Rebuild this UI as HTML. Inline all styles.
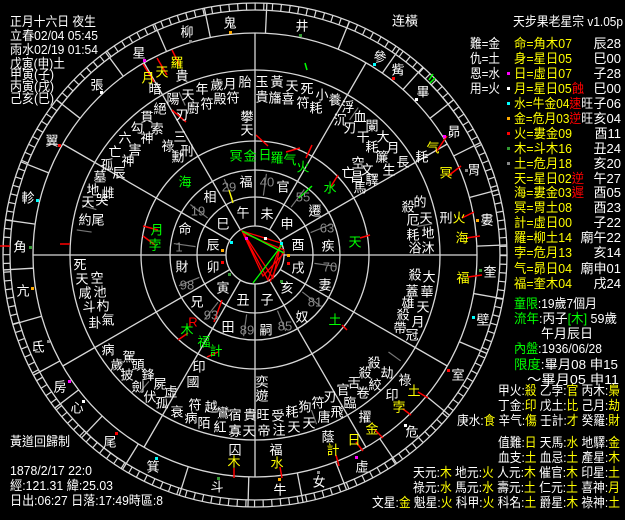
<!DOCTYPE html>
<html><head><meta charset="utf-8">
<style>
html,body{margin:0;padding:0;background:#000;}
body{width:625px;height:520px;overflow:hidden;}
svg{display:block;font-family:"Liberation Sans","Noto Sans CJK TC",sans-serif;font-size:13px;}
.c text{text-anchor:middle;dominant-baseline:central;}
.w{fill:#fff}.y{fill:#ff0}.g{fill:#0f0}.r{fill:#f00}.gr{fill:#8a8a8a}
</style></head><body>
<svg width="625" height="520" viewBox="0 0 625 520" xmlns="http://www.w3.org/2000/svg">
<rect width="625" height="520" fill="#000"/>
<g fill="none" stroke="#d8d8d8" stroke-width="1.3">
<circle cx="255" cy="255" r="252"/>
<circle cx="255" cy="255" r="245"/>
<circle cx="255" cy="255" r="248.5" stroke-width="7" stroke-dasharray="1.2 7.47"/>
<circle cx="255" cy="255" r="222"/>
<circle cx="255" cy="255" r="185"/>
<circle cx="255" cy="255" r="114"/>
<circle cx="255" cy="255" r="85"/>
<circle cx="255" cy="255" r="58"/>
<circle cx="255" cy="255" r="29"/>
</g>
<g transform="translate(255,255)" stroke="#d8d8d8" stroke-width="1.3">
<line x1="29" x2="222" transform="rotate(0)"/><line x1="29" x2="222" transform="rotate(30)"/>
<line x1="29" x2="222" transform="rotate(60)"/><line x1="29" x2="222" transform="rotate(90)"/>
<line x1="29" x2="222" transform="rotate(120)"/><line x1="29" x2="222" transform="rotate(150)"/>
<line x1="29" x2="222" transform="rotate(180)"/><line x1="29" x2="222" transform="rotate(210)"/>
<line x1="29" x2="222" transform="rotate(240)"/><line x1="29" x2="222" transform="rotate(270)"/>
<line x1="29" x2="222" transform="rotate(300)"/><line x1="29" x2="222" transform="rotate(330)"/>
<g>
<line x1="222" x2="252" transform="rotate(272.7)"/><line x1="222" x2="252" transform="rotate(292)"/>
<line x1="222" x2="252" transform="rotate(305)"/><line x1="222" x2="252" transform="rotate(311.8)"/>
<line x1="222" x2="252" transform="rotate(322)"/><line x1="222" x2="252" transform="rotate(333.5)"/>
<line x1="222" x2="252" transform="rotate(345)"/><line x1="222" x2="252" transform="rotate(357.7)"/>
<line x1="222" x2="252" transform="rotate(10)"/><line x1="222" x2="252" transform="rotate(23)"/>
<line x1="222" x2="252" transform="rotate(39.5)"/><line x1="222" x2="252" transform="rotate(55.8)"/>
<line x1="222" x2="252" transform="rotate(68.7)"/><line x1="222" x2="252" transform="rotate(79)"/>
<line x1="222" x2="252" transform="rotate(91.6)"/><line x1="222" x2="252" transform="rotate(107.5)"/>
<line x1="222" x2="252" transform="rotate(121.7)"/><line x1="222" x2="252" transform="rotate(133.5)"/>
<line x1="222" x2="252" transform="rotate(142.6)"/><line x1="222" x2="252" transform="rotate(151.5)"/>
<line x1="222" x2="252" transform="rotate(164)"/><line x1="222" x2="252" transform="rotate(176.6)"/>
<line x1="222" x2="252" transform="rotate(188)"/><line x1="222" x2="252" transform="rotate(201.7)"/>
<line x1="222" x2="252" transform="rotate(218)"/><line x1="222" x2="252" transform="rotate(233.6)"/>
<line x1="222" x2="252" transform="rotate(246.5)"/><line x1="222" x2="252" transform="rotate(258.4)"/>
</g>
<g stroke="#777" stroke-width="1.2">
<line x1="60" x2="82" transform="rotate(-82)"/><line x1="60" x2="82" transform="rotate(-53)"/>
<line x1="60" x2="82" transform="rotate(-22)"/><line x1="60" x2="82" transform="rotate(8)"/>
<line x1="60" x2="82" transform="rotate(38)"/><line x1="60" x2="82" transform="rotate(68)"/>
<line x1="60" x2="82" transform="rotate(98)"/><line x1="60" x2="82" transform="rotate(128)"/>
<line x1="60" x2="82" transform="rotate(158)"/><line x1="60" x2="82" transform="rotate(188)"/>
<line x1="60" x2="82" transform="rotate(218)"/><line x1="60" x2="82" transform="rotate(248)"/>
<line x1="165" x2="180" transform="rotate(-55)"/><line x1="165" x2="180" transform="rotate(-10)"/>
<line x1="165" x2="180" transform="rotate(36)"/><line x1="165" x2="180" transform="rotate(70)"/>
<line x1="165" x2="180" transform="rotate(130)"/><line x1="165" x2="180" transform="rotate(188)"/>
<line x1="165" x2="180" transform="rotate(196)"/><line x1="165" x2="180" transform="rotate(245)"/>
</g>
</g>
<g stroke-width="1.3" fill="none">
<polyline stroke="#f00" points="242,231 281,243 268,280 242,231 284,253 263,276 242,231 273,278 281,243"/>
<polyline stroke="#e00" points="243,233 284,250 270,282"/>
<line stroke="#0f0" x1="242" y1="231" x2="284" y2="253"/>
<line stroke="#0f0" x1="253" y1="283" x2="282" y2="245"/>
</g>
<g stroke="#f00" stroke-width="1.5">
<line x1="143" y1="64" x2="154" y2="82"/><line x1="157" y1="58" x2="167" y2="75"/><line x1="172" y1="50" x2="180" y2="66"/>
<line x1="436" y1="152" x2="447" y2="136"/><line x1="448" y1="176" x2="461" y2="166"/>
<line x1="462" y1="218" x2="474" y2="212"/><line x1="466" y1="238" x2="480" y2="236"/><line x1="468" y1="277" x2="482" y2="275"/>
<line x1="418" y1="392" x2="428" y2="398"/><line x1="403" y1="409" x2="411" y2="415"/><line x1="375" y1="430" x2="383" y2="438"/>
<line x1="356" y1="442" x2="363" y2="451"/><line x1="336" y1="455" x2="339" y2="466"/><line x1="280" y1="467" x2="282" y2="478"/><line x1="234" y1="468" x2="234" y2="478"/>
<line x1="214" y1="322" x2="222" y2="300"/><line x1="178" y1="340" x2="188" y2="333"/><line x1="207" y1="357" x2="218" y2="352"/>
<line x1="143" y1="226" x2="158" y2="230"/><line x1="143" y1="236" x2="155" y2="245"/>
<line x1="312" y1="145" x2="306" y2="158"/><line x1="338" y1="175" x2="330" y2="188"/><line x1="360" y1="238" x2="370" y2="235"/>
<line x1="342" y1="325" x2="347" y2="330"/><line x1="172" y1="110" x2="186" y2="122"/>
<line x1="256" y1="135" x2="268" y2="146"/><line x1="286" y1="152" x2="300" y2="148"/><line x1="60" y1="244" x2="70" y2="244"/>
<line x1="0" y1="246" x2="10" y2="246"/>
</g>
<g stroke="#0f0" stroke-width="1.5"><line x1="299" y1="198" x2="312" y2="186"/><line x1="429" y1="80" x2="433" y2="74"/><line x1="430" y1="83" x2="435" y2="78"/></g>
<line x1="305" y1="63" x2="307" y2="70" stroke="#0f0" stroke-width="1.5"/>
<line x1="229" y1="190" x2="233" y2="203" stroke="#ff0" stroke-width="1.3"/>
<g>
<rect x="245" y="237" width="3" height="3" fill="#f0f"/><rect x="264" y="237" width="3" height="3" fill="#fff"/>
<rect x="280" y="242" width="3" height="3" fill="#0ff"/><rect x="287" y="254" width="3" height="3" fill="#fa0"/>
<rect x="287" y="262" width="3" height="3" fill="#f00"/><rect x="280" y="280" width="3" height="3" fill="#393"/>
<rect x="228" y="273" width="3" height="3" fill="#393"/><rect x="221" y="261" width="3" height="3" fill="#f00"/>
<rect x="221" y="249" width="3" height="3" fill="#fa0"/><rect x="230" y="241" width="3" height="3" fill="#0ff"/>
<rect x="229" y="31" width="3" height="3" fill="#fa0"/><rect x="189" y="40" width="3" height="3" fill="#888"/>
<rect x="143" y="59" width="3" height="3" fill="#f0f"/><rect x="100" y="91" width="3" height="3" fill="#fff"/>
<rect x="58" y="144" width="3" height="3" fill="#f00"/><rect x="36" y="199" width="3" height="3" fill="#0ff"/>
<rect x="29" y="246" width="3" height="3" fill="#393"/><rect x="31" y="287" width="3" height="3" fill="#fa0"/>
<rect x="47" y="340" width="3" height="3" fill="#888"/><rect x="68" y="380" width="3" height="3" fill="#f0f"/>
<rect x="82" y="400" width="3" height="3" fill="#fff"/><rect x="115" y="432" width="3" height="3" fill="#f00"/>
<rect x="155" y="457" width="3" height="3" fill="#0ff"/><rect x="217" y="477" width="3" height="3" fill="#393"/>
<rect x="278" y="478" width="3" height="3" fill="#fa0"/><rect x="317" y="471" width="3" height="3" fill="#888"/>
<rect x="355" y="456" width="3" height="3" fill="#f0f"/><rect x="404" y="424" width="3" height="3" fill="#fff"/>
<rect x="447" y="369" width="3" height="3" fill="#f00"/><rect x="472" y="316" width="3" height="3" fill="#0ff"/>
<rect x="479" y="269" width="3" height="3" fill="#393"/><rect x="476" y="219" width="3" height="3" fill="#fa0"/>
<rect x="465" y="169" width="3" height="3" fill="#888"/><rect x="443" y="135" width="3" height="3" fill="#f0f"/>
<rect x="415" y="98" width="3" height="3" fill="#fff"/><rect x="392" y="77" width="3" height="3" fill="#f00"/>
<rect x="373" y="63" width="3" height="3" fill="#0ff"/><rect x="299" y="34" width="3" height="3" fill="#393"/>
</g>
<g class="c">
<text x="243" y="213" class="w">午</text><text x="267" y="214" class="w">未</text><text x="287" y="224" class="w">申</text>
<text x="298" y="245" class="w">酉</text><text x="298" y="268" class="w">戌</text><text x="287" y="288" class="w">亥</text>
<text x="267" y="300" class="w">子</text><text x="243" y="300" class="w">丑</text><text x="223" y="288" class="w">寅</text>
<text x="213" y="267" class="w">卯</text><text x="213" y="245" class="w">辰</text><text x="223" y="224" class="w">巳</text>
<text x="246" y="182" class="w">福</text><text x="229" y="187" class="gr">29</text>
<text x="283" y="187" class="w">官</text><text x="267" y="182" class="gr">40</text>
<text x="303" y="197" class="gr">55</text><text x="315" y="211" class="w">遷</text>
<text x="327" y="228" class="gr">63</text><text x="328" y="246" class="w">疾</text>
<text x="330" y="267" class="gr">70</text><text x="325" y="285" class="w">妻</text>
<text x="315" y="302" class="gr">81</text><text x="302" y="317" class="w">奴</text>
<text x="285" y="326" class="gr">85</text><text x="266" y="330" class="w">嗣</text>
<text x="247" y="330" class="gr">89</text><text x="228" y="327" class="w">田</text>
<text x="211" y="315" class="gr">93</text><text x="197" y="302" class="w">兄</text>
<text x="187" y="285" class="gr">98</text><text x="182" y="267" class="w">財</text>
<text x="198" y="211" class="gr">19</text><text x="210" y="197" class="w">相</text>
<text x="185" y="229" class="w">命</text><text x="179" y="247" class="gr">1</text>
<text x="230" y="23" class="w">鬼</text><text x="187" y="32" class="w">柳</text><text x="139" y="53" class="w">星</text>
<text x="97" y="85" class="w">張</text><text x="52" y="141" class="w">翼</text><text x="28" y="198" class="w">軫</text>
<text x="20" y="247" class="w">角</text><text x="23" y="291" class="w">亢</text><text x="38" y="347" class="w">氐</text>
<text x="60" y="387" class="w">房</text><text x="77" y="408" class="w">心</text><text x="110" y="442" class="w">尾</text>
<text x="153" y="467" class="w">箕</text><text x="217" y="487" class="w">斗</text><text x="280" y="490" class="w">牛</text>
<text x="319" y="482" class="w">女</text><text x="362" y="467" class="w">虛</text><text x="412" y="432" class="w">危</text>
<text x="458" y="375" class="w">室</text><text x="483" y="320" class="w">壁</text><text x="490" y="272" class="w">奎</text>
<text x="487" y="220" class="w">婁</text><text x="474" y="170" class="w">胃</text><text x="454" y="132" class="w">昴</text>
<text x="423" y="92" class="w">畢</text><text x="398" y="70" class="w">觜</text><text x="380" y="57" class="w">參</text>
<text x="302" y="26" class="w">井</text><text x="405" y="21" class="w">连橫</text>
<text x="148" y="78" class="y">月</text><text x="162" y="72" class="y">天</text><text x="177" y="63" class="y">羅</text>
<text x="433" y="148" class="y">气</text><text x="446" y="173" class="y">冥</text><text x="459" y="218" class="y">火</text>
<text x="462" y="238" class="y">海</text><text x="463" y="278" class="y">福</text><text x="414" y="391" class="y">土</text>
<text x="399" y="407" class="y">孛</text><text x="372" y="429" class="y">金</text><text x="354" y="440" class="y">日</text>
<text x="333" y="450" class="y">計</text><text x="277" y="463" class="y">水</text><text x="234" y="462" class="y">木</text>
<text x="236" y="156" class="g">冥</text><text x="250" y="156" class="g">金</text><text x="265" y="155" class="g">日</text>
<text x="277" y="158" class="g">羅</text><text x="290" y="160" class="g">气</text><text x="303" y="167" class="g">火</text>
<text x="330" y="188" class="g">水</text><text x="355" y="242" class="g">天</text><text x="185" y="182" class="g">海</text>
<text x="157" y="230" class="g">月</text><text x="155" y="245" class="g">孛</text><text x="187" y="330" class="g">木</text>
<text x="193" y="322" class="r">R</text><text x="204" y="342" class="g">福</text><text x="216" y="351" class="g">計</text>
<text x="335" y="320" class="g">土</text>
<g class="w">
<text x="155" y="89">暗</text><text x="173" y="99">陽</text><text x="188" y="95">天</text><text x="202" y="89">年</text>
<text x="217" y="85">歲</text><text x="230" y="84">月</text><text x="245" y="82">胎</text><text x="182" y="76">貴</text>
<text x="160" y="109">絕</text><text x="182" y="115">刃</text><text x="193" y="108">廚</text><text x="207" y="104">符</text>
<text x="220" y="99">殿</text><text x="233" y="98">符</text>
<text x="147" y="117">貫</text><text x="137" y="128">勾</text><text x="157" y="129">索</text><text x="147" y="138">神</text>
<text x="125" y="138">六</text><text x="135" y="150">害</text><text x="180" y="137">三</text><text x="168" y="146">祿</text>
<text x="187" y="151">刑</text><text x="178" y="157">勳</text>
<text x="115" y="152">亡</text><text x="128" y="161">神</text><text x="107" y="165">孤</text><text x="119" y="173">辰</text>
<text x="100" y="177">墓</text><text x="93" y="190">地</text><text x="108" y="193">雌</text><text x="88" y="202">天</text>
<text x="102" y="200">哭</text><text x="85" y="220">約</text><text x="98" y="220">尾</text>
<text x="247" y="117">攀</text><text x="247" y="130">天</text>
<text x="262" y="82">玉</text><text x="277" y="82">黃</text><text x="292" y="86">天</text><text x="307" y="89">死</text>
<text x="322" y="95">小</text><text x="335" y="100">養</text>
<text x="262" y="97">貴</text><text x="275" y="98">旛</text><text x="288" y="99">喜</text><text x="303" y="103">符</text>
<text x="316" y="108">耗</text>
<text x="348" y="107">浮</text><text x="360" y="117">血</text><text x="340" y="120">沉</text><text x="350" y="128">刃</text>
<text x="372" y="126">闌</text><text x="363" y="137">干</text><text x="383" y="137">大</text><text x="372" y="147">耗</text>
<text x="393" y="148">月</text><text x="382" y="157">簾</text><text x="403" y="162">長</text><text x="422" y="157">耗</text>
<text x="389" y="170">生</text>
<text x="358" y="163">空</text><text x="367" y="170">文</text><text x="348" y="173">亡</text><text x="357" y="177">昌</text>
<text x="372" y="180">驛</text><text x="360" y="188">馬</text>
<text x="408" y="207">殺</text><text x="420" y="202">的</text><text x="413" y="220">厄</text><text x="426" y="218">天</text>
<text x="446" y="218">刑</text><text x="413" y="235">耗</text><text x="428" y="233">地</text><text x="415" y="248">浴</text>
<text x="428" y="248">沐</text>
<text x="415" y="275">殺</text><text x="429" y="277">大</text><text x="412" y="291">蓋</text><text x="427" y="292">華</text>
<text x="408" y="303">雄</text><text x="423" y="307">天</text><text x="403" y="315">殺</text><text x="418" y="322">月</text>
<text x="400" y="328">帶</text><text x="412" y="335">冠</text>
<text x="374" y="363">殺</text><text x="387" y="373">劫</text><text x="365" y="373">殺</text><text x="375" y="385">絞</text>
<text x="354" y="383">舌</text><text x="363" y="393">卷</text><text x="343" y="390">官</text><text x="350" y="403">臨</text>
<text x="330" y="397">刃</text><text x="318" y="403">符</text><text x="337" y="412">飛</text><text x="305" y="407">狗</text>
<text x="324" y="417">唐</text><text x="292" y="412">耗</text><text x="309" y="423">天</text><text x="278" y="416">受</text>
<text x="279" y="430">注</text><text x="294" y="427">天</text><text x="263" y="415">旺</text><text x="264" y="431">帝</text>
<text x="250" y="415">貴</text><text x="249" y="431">天</text><text x="235" y="415">宿</text><text x="235" y="431">寡</text>
<text x="262" y="382">奕</text><text x="262" y="396">遊</text>
<text x="405" y="380">祿</text><text x="392" y="395">印</text><text x="365" y="417">擢</text><text x="328" y="437">蔭</text>
<text x="276" y="450">福</text><text x="235" y="450">囚</text>
<text x="195" y="405">符</text><text x="211" y="407">越</text><text x="223" y="413">鸞</text>
<text x="177" y="412">衰</text><text x="191" y="418">病</text><text x="204" y="423">陌</text><text x="220" y="427">紅</text>
<text x="108" y="350">病</text><text x="129" y="357">駕</text><text x="117" y="365">歲</text><text x="138" y="365">頭</text>
<text x="127" y="375">披</text><text x="148" y="375">鋒</text><text x="138" y="387">劍</text><text x="160" y="384">屍</text>
<text x="150" y="397">伏</text><text x="171" y="392">虛</text><text x="162" y="403">孤</text>
<text x="199" y="367">印</text><text x="193" y="382">國</text>
<text x="80" y="265">死</text><text x="82" y="279">天</text><text x="97" y="278">空</text><text x="85" y="293">咸</text>
<text x="100" y="292">池</text><text x="89" y="307">斗</text><text x="103" y="306">杓</text><text x="95" y="323">卦</text>
<text x="108" y="320">氣</text>
</g>
</g>
<g class="w" lengthAdjust="spacingAndGlyphs">
<text x="10" y="26" textLength="86" lengthAdjust="spacingAndGlyphs">正月十六日 夜生</text>
<text x="10" y="40" textLength="88" lengthAdjust="spacingAndGlyphs">立春02/04 05:45</text>
<text x="10" y="54" textLength="88" lengthAdjust="spacingAndGlyphs">雨水02/19 01:54</text>
<text x="10" y="68" textLength="55" lengthAdjust="spacingAndGlyphs">戊寅(申)土</text>
<text x="10" y="79" textLength="44" lengthAdjust="spacingAndGlyphs">甲寅(子)</text>
<text x="10" y="91" textLength="44" lengthAdjust="spacingAndGlyphs">丙寅(戌)</text>
<text x="10" y="103" textLength="44" lengthAdjust="spacingAndGlyphs">己亥(巳)</text>
<text x="10" y="446" textLength="60" lengthAdjust="spacingAndGlyphs">黃道回歸制</text>
<text x="10" y="475" textLength="82" lengthAdjust="spacingAndGlyphs">1878/2/17 22:0</text>
<text x="10" y="490" textLength="103" lengthAdjust="spacingAndGlyphs">經:121.31 緯:25.03</text>
<text x="10" y="505" textLength="153" lengthAdjust="spacingAndGlyphs">日出:06:27 日落:17:49時區:8</text>
</g>
<g>
<text x="513" y="26" class="w" textLength="110" lengthAdjust="spacingAndGlyphs">天步果老星宗 v1.05p</text>
<text x="470" y="48" class="w" textLength="30" lengthAdjust="spacingAndGlyphs">難=金</text><text x="470" y="63" class="w" textLength="30" lengthAdjust="spacingAndGlyphs">仇=土</text>
<text x="470" y="78" class="w" textLength="30" lengthAdjust="spacingAndGlyphs">恩=水</text><text x="470" y="93" class="w" textLength="30" lengthAdjust="spacingAndGlyphs">用=火</text>
<g class="y">
<text x="514" y="48" textLength="58" lengthAdjust="spacingAndGlyphs">命=角木07</text>
<text x="514" y="63" textLength="58" lengthAdjust="spacingAndGlyphs">身=星日05</text>
<text x="514" y="78" textLength="58" lengthAdjust="spacingAndGlyphs">日=虛日07</text>
<text x="514" y="93" textLength="70" lengthAdjust="spacingAndGlyphs">月=星日05<tspan class="r">蝕</tspan></text>
<text x="514" y="108" textLength="79" lengthAdjust="spacingAndGlyphs">水=牛金04<tspan class="r">速</tspan><tspan class="w">旺</tspan></text>
<text x="514" y="123" textLength="79" lengthAdjust="spacingAndGlyphs">金=危月03<tspan class="r">逆</tspan><tspan class="w">旺</tspan></text>
<text x="514" y="138" textLength="58" lengthAdjust="spacingAndGlyphs">火=婁金09</text>
<text x="514" y="153" textLength="58" lengthAdjust="spacingAndGlyphs">木=斗木16</text>
<text x="514" y="168" textLength="58" lengthAdjust="spacingAndGlyphs">土=危月18</text>
<text x="514" y="183" textLength="70" lengthAdjust="spacingAndGlyphs">天=星日02<tspan class="r">逆</tspan></text>
<text x="514" y="197" textLength="70" lengthAdjust="spacingAndGlyphs">海=婁金03<tspan class="r">遲</tspan></text>
<text x="514" y="212" textLength="58" lengthAdjust="spacingAndGlyphs">冥=胃土08</text>
<text x="514" y="227" textLength="58" lengthAdjust="spacingAndGlyphs">計=虛日00</text>
<text x="514" y="242" textLength="58" lengthAdjust="spacingAndGlyphs">羅=柳土14</text>
<text x="514" y="257" textLength="58" lengthAdjust="spacingAndGlyphs">孛=危月13</text>
<text x="514" y="273" textLength="58" lengthAdjust="spacingAndGlyphs">气=昴日04</text>
<text x="514" y="288" textLength="58" lengthAdjust="spacingAndGlyphs">福=奎木04</text>
</g>
<g class="w" text-anchor="end">
<text x="621" y="48">辰28</text><text x="621" y="63">巳00</text><text x="621" y="78">子28</text>
<text x="621" y="93">巳00</text><text x="621" y="108">子06</text><text x="621" y="123">亥04</text>
<text x="621" y="138">酉11</text><text x="621" y="153">丑24</text><text x="621" y="168">亥20</text>
<text x="621" y="183">午27</text><text x="621" y="197">酉05</text><text x="621" y="212">酉23</text>
<text x="621" y="227">子22</text><text x="621" y="242">廟午22</text><text x="621" y="257">亥14</text>
<text x="621" y="273">廟申01</text><text x="621" y="288">戌24</text>
</g>
<rect x="507" y="72" width="3" height="3" fill="#f0f"/><rect x="507" y="87" width="3" height="3" fill="#fff"/>
<rect x="507" y="102" width="3" height="3" fill="#0ff"/><rect x="507" y="117" width="3" height="3" fill="#fa0"/>
<rect x="507" y="132" width="3" height="3" fill="#f00"/><rect x="507" y="147" width="3" height="3" fill="#393"/>
<rect x="507" y="162" width="3" height="3" fill="#888"/>
<text x="514" y="308" class="g" textLength="83" lengthAdjust="spacingAndGlyphs">童限<tspan class="w">:19歲7個月</tspan></text>
<text x="514" y="323" class="g" textLength="103" lengthAdjust="spacingAndGlyphs">流年<tspan class="w">:丙子</tspan>[木]<tspan class="w">  59歲</tspan></text>
<text x="541" y="338" class="w" textLength="52" lengthAdjust="spacingAndGlyphs">午月辰日</text>
<text x="514" y="353" class="g" textLength="88" lengthAdjust="spacingAndGlyphs">內盤<tspan class="w">:1936/06/28</tspan></text>
<text x="514" y="369" class="g" textLength="104" lengthAdjust="spacingAndGlyphs">限度<tspan class="w">:畢月08   申15</tspan></text>
<text x="527" y="384" class="w" textLength="92" lengthAdjust="spacingAndGlyphs">～畢月05   申11</text>
<g class="w">
<text x="498" y="395" textLength="122" lengthAdjust="spacingAndGlyphs">甲火:<tspan class="y">殺</tspan> 乙孛:<tspan class="y">官</tspan> 丙木:<tspan class="y">梟</tspan></text>
<text x="498" y="410" textLength="122" lengthAdjust="spacingAndGlyphs">丁金:<tspan class="y">印</tspan> 戊土:<tspan class="y">比</tspan> 己月:<tspan class="y">劫</tspan></text>
<text x="457" y="425" textLength="163" lengthAdjust="spacingAndGlyphs">庚水:<tspan class="y">食</tspan> 辛气:<tspan class="y">傷</tspan> 壬計:<tspan class="y">才</tspan> 癸羅:<tspan class="y">財</tspan></text>
<text x="498" y="447" textLength="122" lengthAdjust="spacingAndGlyphs">值難:<tspan class="y">日</tspan> 天馬:<tspan class="y">水</tspan> 地驛:<tspan class="y">金</tspan></text>
<text x="498" y="462" textLength="122" lengthAdjust="spacingAndGlyphs">血支:<tspan class="y">土</tspan> 血忌:<tspan class="y">土</tspan> 產星:<tspan class="y">木</tspan></text>
<text x="413" y="477" textLength="207" lengthAdjust="spacingAndGlyphs">天元:<tspan class="y">木</tspan> 地元:<tspan class="y">火</tspan> 人元:<tspan class="y">木</tspan> 催官:<tspan class="y">木</tspan> 印星:<tspan class="y">土</tspan></text>
<text x="413" y="492" textLength="207" lengthAdjust="spacingAndGlyphs">祿元:<tspan class="y">水</tspan> 馬元:<tspan class="y">水</tspan> 壽元:<tspan class="y">土</tspan> 仁元:<tspan class="y">土</tspan> 喜神:<tspan class="y">月</tspan></text>
<text x="372" y="507" textLength="248" lengthAdjust="spacingAndGlyphs">文星:<tspan class="y">金</tspan> 魁星:<tspan class="y">火</tspan> 科甲:<tspan class="y">火</tspan> 科名:<tspan class="y">土</tspan> 爵星:<tspan class="y">木</tspan> 祿神:<tspan class="y">土</tspan></text>
</g>
</g>
</svg>
</body></html>
